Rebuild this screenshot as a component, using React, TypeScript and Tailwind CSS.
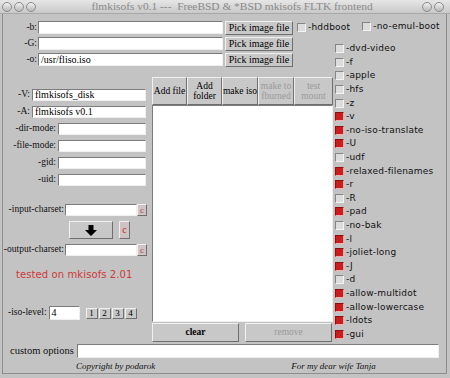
import React from 'react';

const serif = "font-['Liberation_Serif','Times_New_Roman',serif]";
const sans = "font-['DejaVu_Sans','Verdana',sans-serif]";

const sunken =
  'bg-white border border-t-[#7c7c7c] border-l-[#7c7c7c] border-b-[#efefef] border-r-[#efefef]';
const raised =
  'bg-[#c8c8c8] border border-t-[#f0f0f0] border-l-[#f0f0f0] border-b-[#6f6f6f] border-r-[#6f6f6f]';

function Field({ w, h = 'h-[13px]', value }: { w: string; h?: string; value?: string }) {
  return (
    <div className={`${sunken} ${w} ${h} flex items-center pl-[2px] text-[10px] leading-none text-black ${serif}`}>
      {value}
    </div>
  );
}

function Label({ children, className = '' }: { children: React.ReactNode; className?: string }) {
  return <span className={`${serif} text-[9.5px] leading-none text-[#111] ${className}`}>{children}</span>;
}

function Check({ on, label, className = '' }: { on: boolean; label: string; className?: string }) {
  return (
    <div className={`flex items-center gap-[2px] ${className}`}>
      <span
        className={
          on
            ? 'w-[9px] h-[9px] bg-[#cc1c1c] border border-t-[#8a1010] border-l-[#8a1010] border-b-[#f2b0b0] border-r-[#f2b0b0]'
            : 'w-[9px] h-[9px] bg-[#dcdcdc] border border-t-[#858585] border-l-[#858585] border-b-[#f4f4f4] border-r-[#f4f4f4]'
        }
      />
      <span className={`${sans} text-[9px] leading-none tracking-[0.2px] text-[#111]`}>{label}</span>
    </div>
  );
}

const opts: [string, boolean][] = [
  ['-dvd-video', false],
  ['-f', false],
  ['-apple', false],
  ['-hfs', false],
  ['-z', false],
  ['-v', true],
  ['-no-iso-translate', true],
  ['-U', true],
  ['-udf', false],
  ['-relaxed-filenames', true],
  ['-r', true],
  ['-R', false],
  ['-pad', true],
  ['-no-bak', false],
  ['-l', true],
  ['-joliet-long', true],
  ['-J', true],
  ['-d', false],
  ['-allow-multidot', true],
  ['-allow-lowercase', true],
  ['-ldots', true],
  ['-gui', true],
];

function Dot() {
  return (
    <span className="w-[10px] h-[10px] rounded-full border border-[#8c8c8c] bg-gradient-to-b from-[#f2f2f2] to-[#b8b8b8]" />
  );
}

function PickBtn() {
  return (
    <div className={`${raised} ml-[2px] w-[68px] h-[14px] flex items-center justify-center ${serif} text-[10px] leading-none text-black`}>
      Pick image file
    </div>
  );
}

function ToolBtn({ lines, w, dim }: { lines: string[]; w: string; dim?: boolean }) {
  return (
    <div
      className={`${raised} ${w} h-full flex flex-col items-center justify-center ${serif} text-[9.5px] leading-[10px] whitespace-nowrap ${
        dim ? 'text-[#9a9a9a]' : 'text-black'
      }`}
    >
      {lines.map((l) => (
        <span key={l}>{l}</span>
      ))}
    </div>
  );
}

function SmallC() {
  return (
    <div className={`${raised} w-[10px] h-[12px] bg-[#d2c4c4] flex items-center justify-center ${serif} text-[9px] leading-none text-[#a04848]`}>
      c
    </div>
  );
}

function LeftRow({ label, w, value }: { label: string; w: string; value?: string }) {
  return (
    <div className="flex h-[12px] items-center justify-end gap-[2px] pr-[5px]">
      <Label>{label}</Label>
      <Field w={w} h="h-[12px]" value={value} />
    </div>
  );
}

function CharsetRow({ label }: { label: string }) {
  return (
    <div className="flex h-[12px] items-center justify-end pr-[4px]">
      <Label className="mr-[1px]">{label}</Label>
      <Field w="w-[72px]" h="h-[12px]" />
      <SmallC />
    </div>
  );
}

export default function App() {
  return (
    <div className="w-[450px] h-[378px] overflow-hidden bg-[#c3c3c3] flex flex-col">
      {/* title bar */}
      <div className="h-[14px] flex items-center pl-[2px] pr-[6px] bg-gradient-to-b from-[#e6e6e6] to-[#c9c9c9] border-b border-[#a8a8a8]">
        <div className="flex gap-[2px]">
          <Dot />
          <Dot />
          <Dot />
        </div>
        <div className={`flex-1 text-center pl-[6px] ${serif} text-[11.4px] leading-none text-[#8a8a8a] whitespace-pre`}>
          flmkisofs v0.1 ---  FreeBSD &amp; *BSD mkisofs FLTK frontend
        </div>
        <div className="flex gap-[2px]">
          <Dot />
          <Dot />
        </div>
      </div>

      {/* window body */}
      <div className="ml-[2px] mr-[3px] border-l border-r border-b border-[#8e8e8e] flex flex-col pb-[1px]">
        {/* -b row */}
        <div className="mt-[7px] flex h-[13px] items-center">
          <Label className="w-[35px] text-right pr-[1px]">-b:</Label>
          <Field w="w-[185px]" />
          <PickBtn />
          <Check on={false} label="-hddboot" className="ml-[4px]" />
          <Check on={false} label="-no-emul-boot" className="ml-[12px] -mt-[3px]" />
        </div>

        <div className="flex">
          {/* left part */}
          <div className="w-[331px] flex flex-col">
            <div className="mt-[3px] flex h-[13px] items-center">
              <Label className="w-[35px] text-right pr-[1px]">-G:</Label>
              <Field w="w-[185px]" />
              <PickBtn />
            </div>
            <div className="mt-[3px] flex h-[13px] items-center">
              <Label className="w-[35px] text-right pr-[1px]">-o:</Label>
              <Field w="w-[185px]" value="/usr/fliso.iso" />
              <PickBtn />
            </div>

            <div className="mt-[10px] flex">
              {/* left fields */}
              <div className="w-[148px] flex flex-col">
                <div className="mt-[13px] flex flex-col gap-[5px]">
                  <LeftRow label="-V:" w="w-[114px]" value="flmkisofs_disk" />
                  <LeftRow label="-A:" w="w-[114px]" value="flmkisofs v0.1" />
                  <LeftRow label="-dir-mode:" w="w-[88px]" />
                  <LeftRow label="-file-mode:" w="w-[88px]" />
                  <LeftRow label="-gid:" w="w-[88px]" />
                  <LeftRow label="-uid:" w="w-[88px]" />
                </div>
                <div className="mt-[18px]">
                  <CharsetRow label="-input-charset:" />
                </div>
                <div className="mt-[5px] flex h-[18px] items-center pl-[66px]">
                  <div className={`${raised} w-[44px] h-[18px] flex items-center justify-center`}>
                    <svg width="12" height="11" viewBox="0 0 12 11">
                      <path d="M3.5 0h5v5h3.5L6 11 0 5h3.5z" fill="#000" />
                    </svg>
                  </div>
                  <div className={`${raised} ml-[6px] w-[11px] h-[18px] bg-[#d0c2c2] flex items-center justify-center ${serif} text-[10px] leading-none text-[#c02828]`}>
                    c
                  </div>
                </div>
                <div className="mt-[5px]">
                  <CharsetRow label="-output-charset:" />
                </div>
                <div className={`mt-[13px] pl-[13px] ${sans} text-[10px] leading-[12px] tracking-[0.1px] text-[#d03838]`}>
                  tested on mkisofs 2.01
                </div>
                <div className="mt-[25px] flex h-[14px] items-center pl-[5px]">
                  <Label>-iso-level:</Label>
                  <div className="ml-[2px]">
                    <Field w="w-[31px]" h="h-[14px]" value="4" />
                  </div>
                  <div className="ml-[6px] flex gap-[1px]">
                    {['1', '2', '3', '4'].map((n) => (
                      <div
                        key={n}
                        className={`${raised} w-[12px] h-[11px] flex items-center justify-center ${serif} text-[9px] leading-none text-black`}
                      >
                        {n}
                      </div>
                    ))}
                  </div>
                </div>
              </div>

              {/* center */}
              <div className="w-[183px] flex flex-col pl-[1px] mt-[1px]">
                <div className="flex h-[28px]">
                  <ToolBtn lines={['Add file']} w="w-[35px]" />
                  <ToolBtn lines={['Add', 'folder']} w="w-[35px]" />
                  <ToolBtn lines={['make iso']} w="w-[36px]" />
                  <ToolBtn lines={['make to', 'fburned']} w="w-[36px]" dim />
                  <ToolBtn lines={['test', 'mount']} w="w-[39px]" dim />
                </div>
                <div className={`${sunken} w-[181px] h-[217px]`} />
                <div className="mt-[1px] flex h-[19px] gap-[6px]">
                  <div className={`${raised} w-[87px] h-full flex items-center justify-center ${serif} text-[9.5px] font-bold leading-none text-black`}>
                    clear
                  </div>
                  <div className={`${raised} w-[87px] h-full flex items-center justify-center ${serif} text-[9.5px] leading-none text-[#9a9a9a]`}>
                    remove
                  </div>
                </div>
              </div>
            </div>
          </div>

          {/* right checkbox column */}
          <div className="mt-[8px] flex flex-col pl-[1px]">
            {opts.map(([l, on]) => (
              <div key={l} className="h-[13.6px] flex items-center">
                <Check on={on} label={l} />
              </div>
            ))}
          </div>
        </div>

        {/* custom options */}
        <div className="mt-[2px] flex h-[14px] items-center pl-[7px]">
          <Label className="text-[10.5px] w-[67px]">custom options</Label>
          <Field w="w-[362px]" h="h-[14px]" />
        </div>

        {/* footer */}
        <div className={`mt-[2px] h-[12px] flex items-center ${serif} italic text-[9px] leading-none text-[#111]`}>
          <span className="ml-[73px]">Copyright by podarok</span>
          <span className="ml-[136px]">For my dear wife Tanja</span>
        </div>
      </div>
    </div>
  );
}
